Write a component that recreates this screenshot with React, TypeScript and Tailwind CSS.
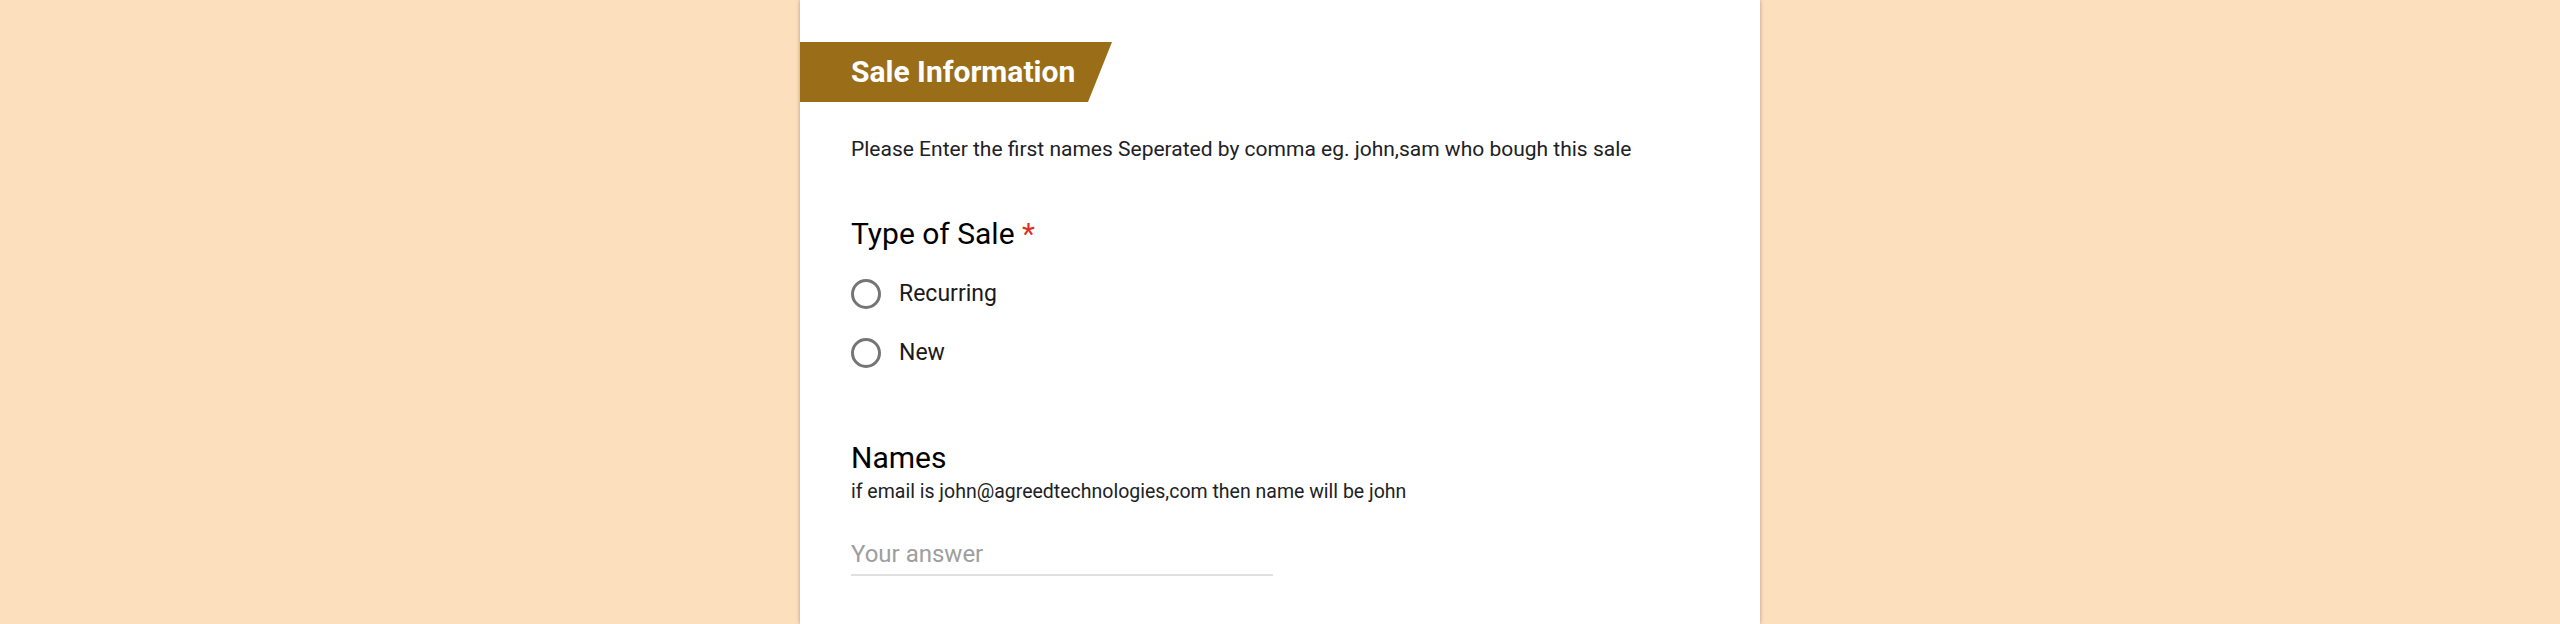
import { useState } from 'react';

const options = ['Recurring', 'New'];

export default function App() {
  const [saleType, setSaleType] = useState('');
  const [names, setNames] = useState('');

  return (
    <div className="min-h-screen flex justify-center bg-[#fcdfbd] font-['Roboto','Liberation_Sans',sans-serif]">
      <div className="w-[960px] min-h-[624px] bg-white shadow-[0_0_4px_rgba(0,0,0,0.3)] pt-[42px]">
        <div className="w-[312px] h-[60px] bg-[#9a6e19] flex items-center pl-[51px] [clip-path:polygon(0_0,100%_0,calc(100%-24px)_100%,0_100%)]">
          <h2 className="text-[30px] leading-[36px] font-bold text-white">Sale Information</h2>
        </div>

        <div className="pl-[51px] pr-[51px]">
          <p className="mt-[34px] text-[21px] leading-[26px] text-[#202124]">
            Please Enter the first names Seperated by comma eg. john,sam who bough this sale
          </p>

          <div className="mt-[54px]">
            <div className="text-[30px] leading-[36px] text-black">
              Type of Sale <span className="text-[#d93025]">*</span>
            </div>
            <div className="mt-[12px]">
              {options.map(opt => (
                <label key={opt} className="h-[59px] flex items-center cursor-pointer">
                  <input
                    type="radio"
                    name="saleType"
                    value={opt}
                    checked={saleType === opt}
                    onChange={() => setSaleType(opt)}
                    className="sr-only"
                  />
                  <span className="w-[30px] h-[30px] rounded-full border-[3px] border-[#757575] flex items-center justify-center">
                    {saleType === opt && <span className="w-[14px] h-[14px] rounded-full bg-[#9a6e19]" />}
                  </span>
                  <span className="ml-[18px] text-[23px] leading-[26px] text-[#1a1a1a]">{opt}</span>
                </label>
              ))}
            </div>
          </div>

          <div className="mt-[60px]">
            <div className="text-[30px] leading-[32px] text-black">Names</div>
            <div className="mt-[7px] text-[19.5px] leading-[22px] text-[#202124]">
              if email is john@agreedtechnologies,com then name will be john
            </div>
            <input
              type="text"
              value={names}
              onChange={e => setNames(e.target.value)}
              placeholder="Your answer"
              className="mt-[37px] block w-[422px] h-[36px] pb-[6px] text-[24px] leading-[28px] text-[#202124] placeholder:text-[#9e9e9e] border-b-2 border-[#e0e0e0] outline-none"
            />
          </div>
        </div>
      </div>
    </div>
  );
}
